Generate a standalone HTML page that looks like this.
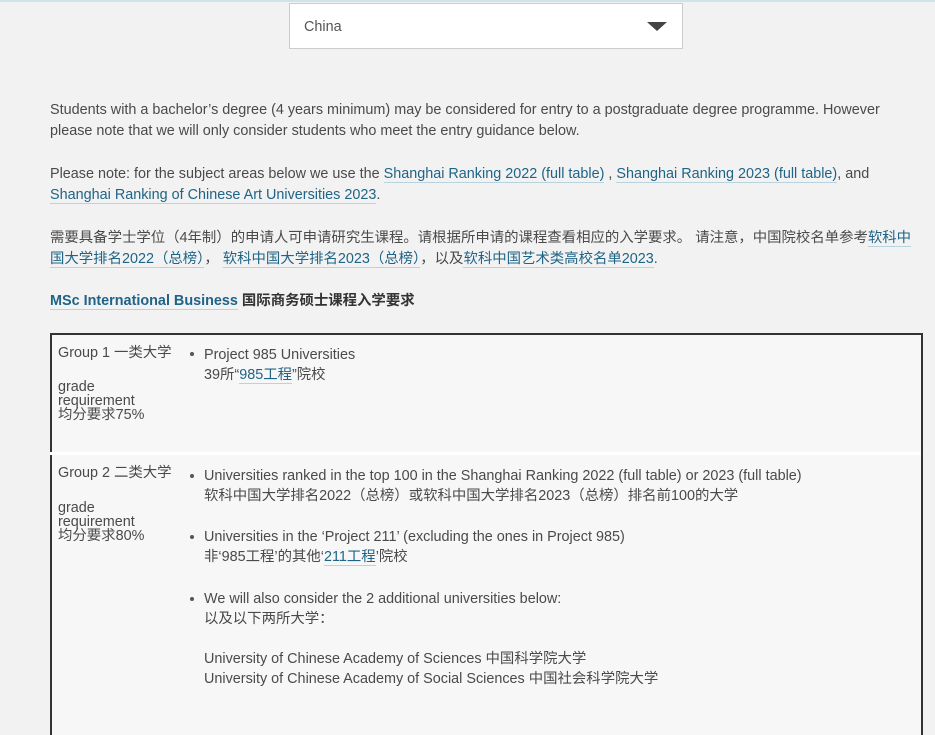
<!DOCTYPE html>
<html><head><meta charset="utf-8"><style>
body{margin:0;background:#f2f2f2;width:935px;height:715px;overflow:hidden;position:relative;font-family:"Liberation Sans","Noto Sans CJK SC",sans-serif;font-size:14.4px;color:#4a4a4a}
.topline{position:absolute;left:0;top:0;width:935px;height:2px;background:#cfe3ea}
.sel{position:absolute;left:289px;top:3px;width:392px;height:44px;background:#fff;border:1px solid #ccc}
.sel span{position:absolute;left:14px;top:15px;color:#555}
.sel i{position:absolute;right:15px;top:18px;width:0;height:0;border-left:10px solid transparent;border-right:10px solid transparent;border-top:9px solid #444}
.t{position:absolute;left:50px;white-space:nowrap;line-height:21px}
a{color:#1f6487;text-decoration:none;border-bottom:1px solid #b8d3de}
.tbl{position:absolute;left:50px;top:333px;width:869px;height:400px;border:2px solid #333;border-bottom:none;background:#f7f7f7}
.div{position:absolute;left:50px;top:452px;width:871px;height:3px;background:#fff}
.c{position:absolute;white-space:nowrap;line-height:20px}
.g{line-height:14px}
.b{position:absolute;width:4px;height:4px;border-radius:2px;background:#555}
</style></head><body>
<div class="topline"></div>
<div class="sel"><span>China</span><i></i></div>
<div class="t" style="top:100px">Students with a bachelor’s degree (4 years minimum) may be considered for entry to a postgraduate degree programme. However<br>please note that we will only consider students who meet the entry guidance below.</div>
<div class="t" style="top:164px">Please note: for the subject areas below we use the <a>Shanghai Ranking 2022 (full table)</a> , <a>Shanghai Ranking 2023 (full table)</a>, and<br><a>Shanghai Ranking of Chinese Art Universities 2023</a>.</div>
<div class="t" style="top:228px">需要具备学士学位（4年制）的申请人可申请研究生课程。请根据所申请的课程查看相应的入学要求。 请注意，中国院校名单参考<a>软科中</a><br><a>国大学排名2022（总榜）</a>， <a>软科中国大学排名2023（总榜）</a>，以及<a>软科中国艺术类高校名单2023</a>.</div>
<div class="t" style="top:291px;font-weight:bold;color:#333"><a style="color:#1f6487">MSc International Business</a> 国际商务硕士课程入学要求</div>
<div class="tbl"></div>
<div class="div"></div>
<div class="c" style="left:58px;top:343px">Group 1 一类大学</div>
<div class="c g" style="left:58px;top:380px">grade<br>requirement<br>均分要求75%</div>
<div class="b" style="left:190px;top:352px"></div>
<div class="c" style="left:204px;top:345px">Project 985 Universities<br>39所“<a>985工程</a>”院校</div>
<div class="c" style="left:58px;top:463px">Group 2 二类大学</div>
<div class="c g" style="left:58px;top:501px">grade<br>requirement<br>均分要求80%</div>
<div class="b" style="left:190px;top:474px"></div>
<div class="c" style="left:204px;top:466px">Universities ranked in the top 100 in the Shanghai Ranking 2022 (full table) or 2023 (full table)<br>软科中国大学排名2022（总榜）或软科中国大学排名2023（总榜）排名前100的大学</div>
<div class="b" style="left:190px;top:535px"></div>
<div class="c" style="left:204px;top:527px">Universities in the ‘Project 211’ (excluding the ones in Project 985)<br>非‘985工程’的其他‘<a>211工程</a>’院校</div>
<div class="b" style="left:190px;top:597px"></div>
<div class="c" style="left:204px;top:589px">We will also consider the 2 additional universities below:<br>以及以下两所大学：</div>
<div class="c" style="left:204px;top:649px">University of Chinese Academy of Sciences 中国科学院大学<br>University of Chinese Academy of Social Sciences 中国社会科学院大学</div>
</body></html>
